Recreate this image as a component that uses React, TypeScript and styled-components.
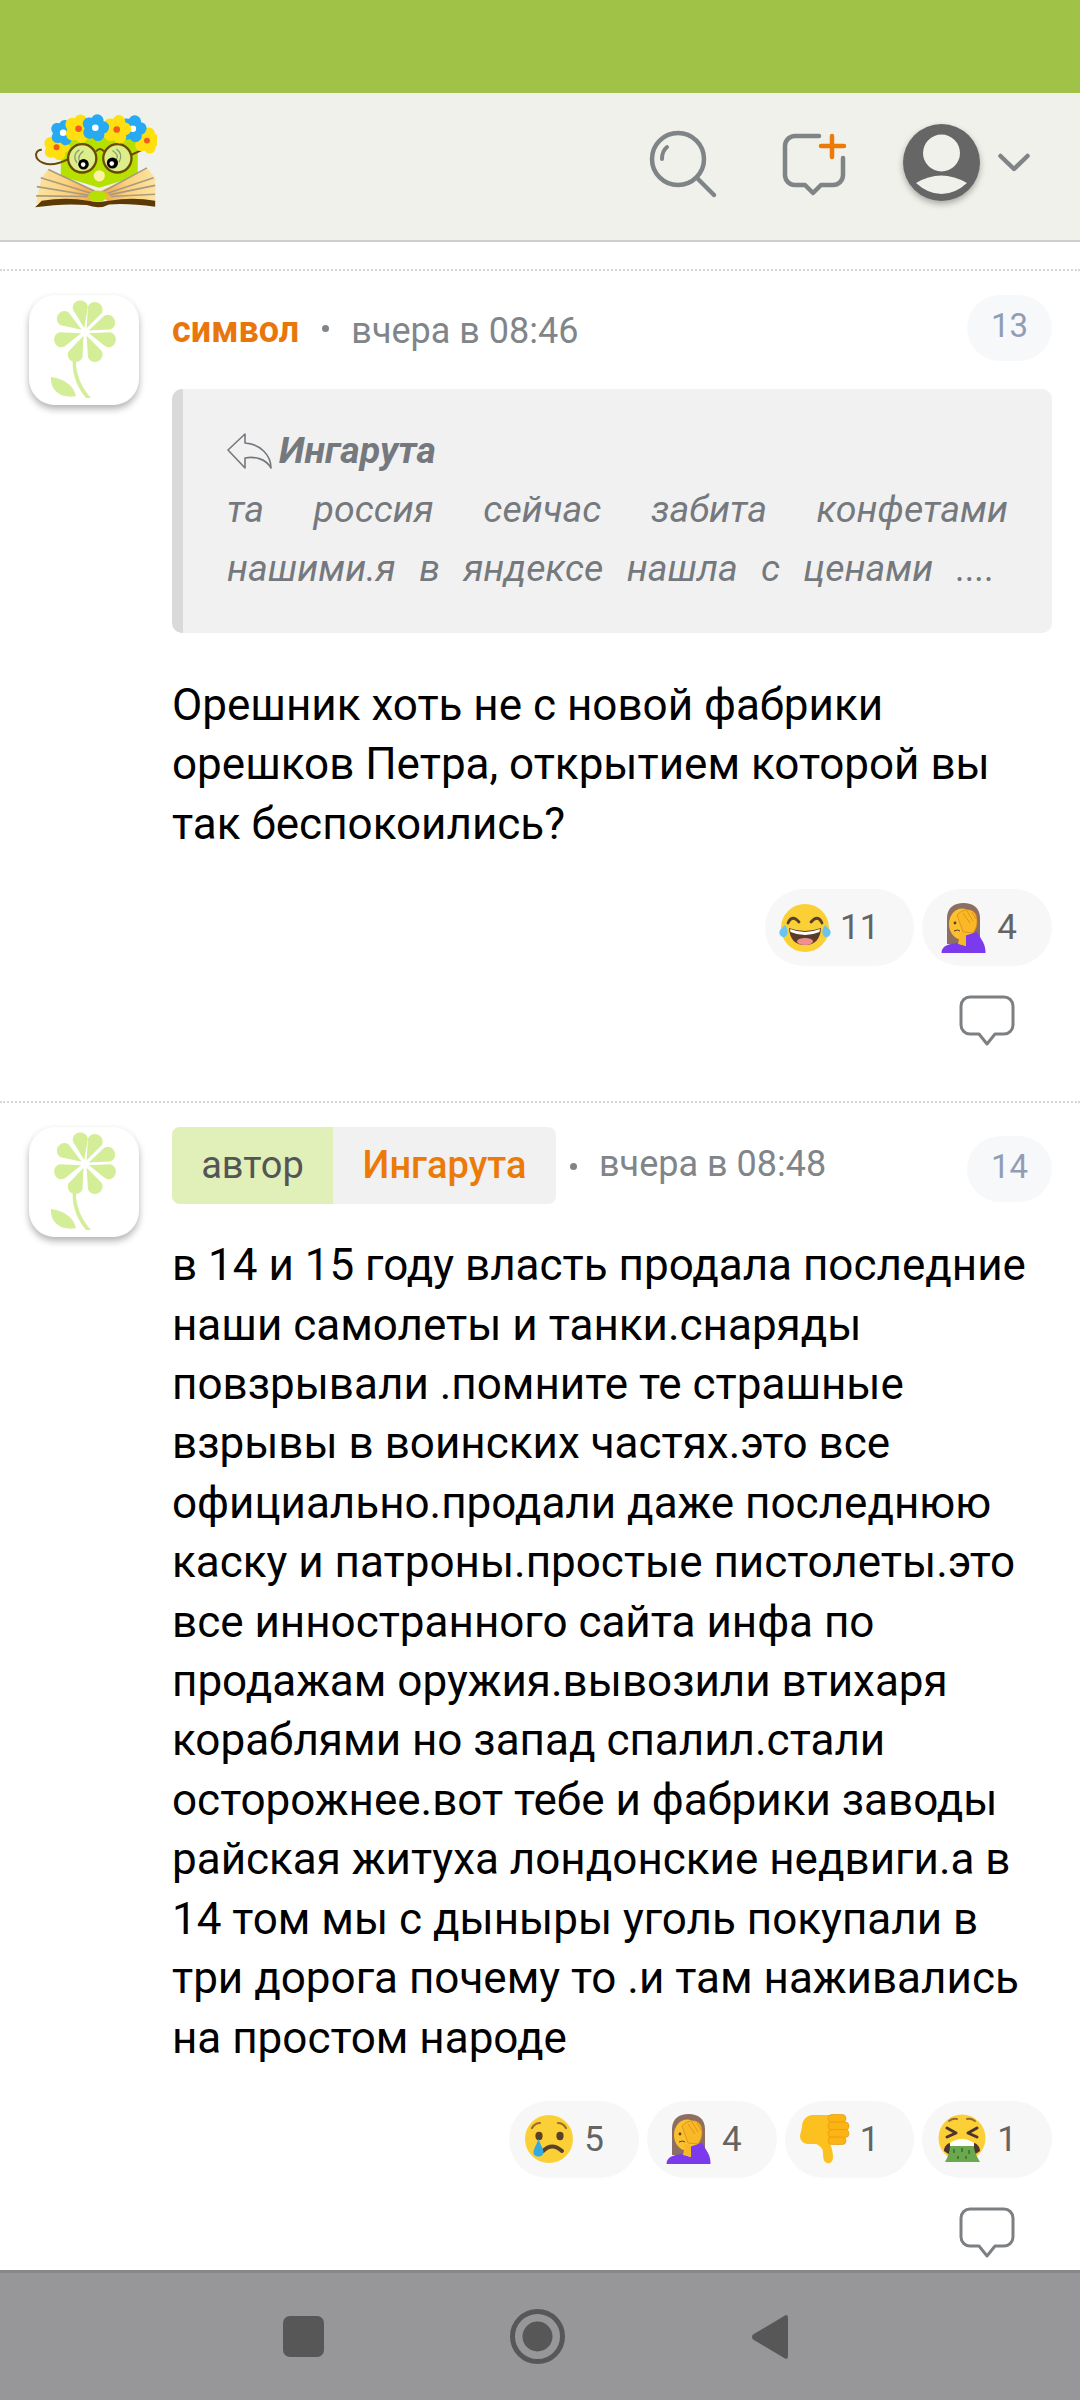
import React from "react";
import styled, { createGlobalStyle } from "styled-components";

const Global = createGlobalStyle`
  html, body { margin: 0; padding: 0; background: #fff; }
  body { font-family: Roboto, "Noto Sans", sans-serif; }
`;

const Page = styled.div`
  width: 1080px;
  height: 2400px;
  display: flex;
  flex-direction: column;
  overflow: hidden;
  background: #fff;
`;
const StatusBar = styled.div`
  height: 93px;
  flex: none;
  background: #a0c247;
`;
const Header = styled.header`
  height: 147px;
  flex: none;
  box-sizing: content-box;
  display: flex;
  align-items: center;
  padding: 0 50px 0 35px;
  background: #f0f1ea;
  border-bottom: 2px solid #cfcfcf;
`;
const LogoBox = styled.svg`
  width: 122px;
  height: 97px;
  margin-bottom: 12px;
`;
const Spacer = styled.div`
  flex: 1;
`;
const HeaderIcon = styled.svg<{ $w: number; $h: number; $gap: number; $shift?: number }>`
  width: ${(p) => p.$w}px;
  height: ${(p) => p.$h}px;
  margin-left: ${(p) => p.$gap}px;
  margin-bottom: ${(p) => p.$shift ?? 5}px;
  flex: none;
  overflow: visible;
`;
const ProfileIcon = styled(HeaderIcon)`
  filter: drop-shadow(0 3px 3px rgba(0, 0, 0, 0.3));
`;
const Feed = styled.main`
  flex: 1;
  min-height: 0;
  overflow: hidden;
  padding-top: 27px;
`;
const Comment = styled.article`
  display: grid;
  grid-template-columns: 110px 1fr;
  column-gap: 33px;
  padding: 24px 28px 0 29px;
  border-top: 2px dotted #d6d6d6;
`;
const Avatar = styled.div`
  width: 110px;
  height: 110px;
  border-radius: 26px;
  background: #fff;
  box-shadow: 0 4px 7px rgba(0, 0, 0, 0.3);
`;
const AvatarArt = styled.svg`
  display: block;
  width: 110px;
  height: 110px;
`;
const Content = styled.div`
  min-width: 0;
`;
const MetaRow = styled.div<{ $height: number }>`
  display: flex;
  align-items: flex-start;
  height: ${(p) => p.$height}px;
`;
const Name = styled.span`
  font-size: 36px;
  font-weight: 700;
  line-height: 70px;
  color: #e9760c;
`;
const AuthorChip = styled.div`
  display: flex;
  height: 77px;
  border-radius: 8px;
  overflow: hidden;
  background: #f1f1f1;
  font-size: 38px;
  line-height: 76px;
`;
const AuthorTag = styled.span`
  width: 161px;
  text-align: center;
  background: #e1f0b9;
  color: #555;
`;
const AuthorName = styled.span`
  width: 223px;
  text-align: center;
  font-weight: 500;
  color: #ec7a08;
`;
const Dot = styled.span<{ $top: number; $left: number; $right: number }>`
  width: 7px;
  height: 7px;
  flex: none;
  border-radius: 50%;
  background: #80858a;
  margin: ${(p) => p.$top}px ${(p) => p.$right}px 0 ${(p) => p.$left}px;
`;
const When = styled.span<{ $line: number }>`
  font-size: 36px;
  line-height: ${(p) => p.$line}px;
  color: #80858a;
`;
const Number = styled.span<{ $top: number }>`
  margin-left: auto;
  margin-top: ${(p) => p.$top}px;
  width: 85px;
  height: 66px;
  border-radius: 33px;
  background: #f7f8fa;
  font-size: 33px;
  line-height: 62px;
  text-align: center;
  color: #929db5;
`;
const Quote = styled.blockquote`
  box-sizing: border-box;
  height: 244px;
  margin: 28px 0 0;
  padding: 32px 0 0 44px;
  background: #f1f1f1;
  border-left: 11px solid #d9d9d9;
  border-radius: 10px;
  color: #75797d;
  font-style: italic;
  font-size: 37.5px;
  line-height: 59px;
`;
const QuoteAuthor = styled.div`
  display: flex;
  align-items: center;
  gap: 7px;
  font-weight: 700;
`;
const ReplyIcon = styled.svg`
  width: 45px;
  height: 36px;
  flex: none;
`;
const QuoteLine = styled.div<{ $width: number }>`
  width: ${(p) => p.$width}px;
  text-align: justify;
  text-align-last: justify;
`;
const Body = styled.p<{ $top: number }>`
  margin: ${(p) => p.$top}px 0 0;
  font-size: 44px;
  line-height: 59.4px;
  color: #000;
`;
const Reactions = styled.div<{ $top: number }>`
  display: flex;
  justify-content: flex-end;
  gap: 8px;
  margin-top: ${(p) => p.$top}px;
`;
const Pill = styled.div`
  display: flex;
  align-items: center;
  gap: 9px;
  height: 77px;
  padding: 0 35px 0 14px;
  border-radius: 39px;
  background: #f7f7f7;
  font-size: 35px;
  color: #646464;
`;
const EmojiArt = styled.svg`
  width: 52px;
  height: 52px;
  flex: none;
`;
const ReplyRow = styled.div`
  display: flex;
  justify-content: flex-end;
  padding: 29px 37px 54px 0;
`;
const ReplyBubble = styled.svg`
  display: block;
  width: 56px;
  height: 52px;
`;
const NavBar = styled.nav`
  height: 127px;
  flex: none;
  display: flex;
  align-items: center;
  justify-content: center;
  gap: 186px;
  padding-right: 10px;
  background: #979799;
  border-top: 3px solid #88888b;
`;
const NavIcon = styled.svg<{ $w: number; $h: number }>`
  width: ${(p) => p.$w}px;
  height: ${(p) => p.$h}px;
  flex: none;
`;

const Flower = ({ x, y, r, color, core, dot }: { x: number; y: number; r: number; color: string; core: string; dot: number }) => (
  <g transform={`translate(${x} ${y})`}>
    {[0, 72, 144, 216, 288].map((a) => (
      <ellipse key={a} cx={0} cy={-r * 0.6} rx={r * 0.56} ry={r * 0.6} fill={color} transform={`rotate(${a + 15})`} />
    ))}
    <circle r={dot} fill={core} />
  </g>
);

const Logo = () => (
  <LogoBox viewBox="105 95 370 295">
    <defs>
      <linearGradient id="pageL" x1="0" x2="1" y1="0" y2="0">
        <stop offset="0" stopColor="#fde3a0" />
        <stop offset="0.5" stopColor="#fbd27e" />
        <stop offset="1" stopColor="#f59a3c" />
      </linearGradient>
      <linearGradient id="pageR" x1="1" x2="0" y1="0" y2="0">
        <stop offset="0" stopColor="#fde3a0" />
        <stop offset="0.5" stopColor="#fbd27e" />
        <stop offset="1" stopColor="#f59a3c" />
      </linearGradient>
    </defs>
    <path d="M183 170H417V290L300 325L183 290Z" fill="#b5e000" />
    <path d="M108 372L124 295L145 270L232 312L298 338L270 372Z" fill="url(#pageL)" />
    <path d="M470 372V296L445 265L370 305L298 338L330 372Z" fill="url(#pageR)" />
    <g stroke="#a89b80" strokeWidth="5" fill="none">
      <path d="M145 270L285 335M122 295L275 342M110 322L268 348M108 350L265 352" />
      <path d="M445 265L315 335M465 295L325 342M470 318L330 347M470 345L335 352" />
    </g>
    <path d="M105 385L125 365Q200 352 265 365Q295 372 330 365Q400 352 470 365V383Q390 372 330 376Q300 392 262 378Q190 372 105 385Z" fill="#5b3a06" />
    <ellipse cx="295" cy="351" rx="28" ry="17" fill="#b5e000" />
    <ellipse cx="300" cy="289" rx="17" ry="17" fill="#fdf2a4" />
    <circle cx="248" cy="236" r="43" fill="#dcee8c" stroke="#6b4a06" strokeWidth="7" />
    <circle cx="355" cy="236" r="43" fill="#dcee8c" stroke="#6b4a06" strokeWidth="7" />
    <path d="M290 215Q302 200 314 215M205 238Q160 262 130 250Q105 240 108 222Q112 210 125 210M398 225L430 210" fill="none" stroke="#6b4a06" strokeWidth="6" />
    <path d="M240 210Q216 225 232 250M252 214Q232 228 240 245M352 208Q374 222 360 248M340 212Q362 226 352 240" fill="none" stroke="#8f9c72" strokeWidth="4" />
    <circle cx="252" cy="254" r="16" fill="#000" />
    <circle cx="251" cy="255" r="7" fill="#fff" />
    <circle cx="340" cy="250" r="17" fill="#000" />
    <circle cx="338" cy="252" r="7" fill="#fff" />
    <Flower x={170} y={202} r={34} color="#ffdf10" core="#f4591d" dot={9} />
    <Flower x={445} y={182} r={34} color="#ffdf10" core="#f4591d" dot={9} />
    <Flower x={190} y={158} r={33} color="#27a9f3" core="#fff" dot={10} />
    <Flower x={402} y={146} r={35} color="#27a9f3" core="#fff" dot={10} />
    <Flower x={237} y={146} r={37} color="#ffdf10" core="#f4591d" dot={10} />
    <Flower x={353} y={148} r={37} color="#ffdf10" core="#f4591d" dot={10} />
    <Flower x={288} y={143} r={35} color="#27a9f3" core="#fff" dot={10} />
  </LogoBox>
);

const Daisy = () => (
  <AvatarArt viewBox="0 0 110 110">
    <g fill="#d4ee97">
      {[-11, 24, 67, 108, 156, 203, 252, 303].map((a) => (
        <path key={a} transform={`translate(56 37) rotate(${a})`} d="M0 -4L-7.5 -24C-8 -29 -4 -32 0 -32C4 -32 8 -29 7.5 -24Z" />
      ))}
      <path d="M44 62L47 62C46 78 52 92 62 103L57 103C48 92 42 78 44 62Z" />
      <path d="M22 82C37 84 45 92 47 101C34 104 21 97 22 82Z" />
    </g>
  </AvatarArt>
);

const BubbleIcon = () => (
  <ReplyBubble viewBox="0 0 56 52">
    <path d="M11 2H45A9 9 0 0 1 54 11V30A9 9 0 0 1 45 39H36L28 49L20 39H11A9 9 0 0 1 2 30V11A9 9 0 0 1 11 2Z" fill="none" stroke="#7c8083" strokeWidth="3" strokeLinejoin="round" />
  </ReplyBubble>
);

const Joy = () => (
  <EmojiArt viewBox="0 0 52 52">
    <circle cx="26" cy="26" r="24" fill="#fbd036" />
    <path d="M9 21Q13 12 20 20M32 20Q39 12 43 21" fill="none" stroke="#5b3f26" strokeWidth="2.8" strokeLinecap="round" />
    <path d="M10 26Q26 32 42 26Q41 43 26 43Q11 43 10 26Z" fill="#5b3a2a" />
    <path d="M11 27Q26 33 41 27L40.5 30Q26 36 11.5 30Z" fill="#fff" />
    <ellipse cx="26" cy="39.5" rx="8" ry="3.4" fill="#f08f8f" />
    <path d="M6 23C9 27 10 32 6 35C2 36 -1 32 1 28Z" fill="#6cc4ee" />
    <path d="M46 23C43 27 42 32 46 35C50 36 53 32 51 28Z" fill="#6cc4ee" />
  </EmojiArt>
);

const Facepalm = () => (
  <EmojiArt viewBox="0 0 52 52">
    <path d="M11 42V16C11 6 18 1 27.500 1C37 1 44 6 44 16V42Z" fill="#8d6e63" />
    <ellipse cx="26" cy="22" rx="13" ry="15.500" fill="#fbc02d" />
    <path d="M21 13C27 6 37 6 40 13C42 20 41 26 37 31L27 30Z" fill="#f9b825" stroke="#d98c1a" strokeWidth="0.8" />
    <path d="M27 11L34 21M31 9L37 19M36 10L40 17" stroke="#d98c1a" strokeWidth="0.8" />
    <circle cx="19" cy="21" r="1.400" fill="#5b3f26" />
    <path d="M18 29Q22 27 24 29" fill="none" stroke="#5b3f26" strokeWidth="1" />
    <path d="M5.500 51C5.500 44 12 42 21 41L30 44L28 34L41 30L47 40C49 44 49.500 47 49.500 51Z" fill="#7c3aed" />
    <path d="M22 42L24 31L30 32L30 44Z" fill="#f9b825" />
  </EmojiArt>
);

const Cry = () => (
  <EmojiArt viewBox="0 0 52 52">
    <circle cx="26" cy="26" r="24" fill="#fbd036" />
    <ellipse cx="16" cy="23" rx="3.600" ry="4.200" fill="#5b3f26" />
    <ellipse cx="37" cy="23" rx="3.600" ry="4.200" fill="#5b3f26" />
    <path d="M9 15Q12 10 17 10M35 10Q40 10 43 15" fill="none" stroke="#9a6b2e" strokeWidth="2.200" strokeLinecap="round" />
    <path d="M20 38Q29 29 39 38" fill="none" stroke="#5b3f26" strokeWidth="4" strokeLinecap="round" />
    <path d="M15.500 26C13 33 10.500 36 10.500 39.500C10.500 45 20.500 45 20.500 39.500C20.500 36 18 33 15.500 26Z" fill="#36a9e1" />
  </EmojiArt>
);

const ThumbDown = () => (
  <EmojiArt viewBox="0 0 52 52">
    <path d="M3 14C3 8 7 2 14 2H31V30C32 33 34 38 34 44C34 49 31 51 28 50C25 49 24 46 24 40C24 36 22 33 17 31H9C4 31 1 27 1 23Z" fill="#fdc11f" />
    <g fill="#fbb414" stroke="#e59a0c" strokeWidth="0.700">
      <rect x="29" y="1.500" width="18" height="8" rx="4" />
      <rect x="29" y="9" width="21" height="8" rx="4" />
      <rect x="29" y="16.500" width="21" height="8" rx="4" />
      <rect x="29" y="24" width="18" height="7.500" rx="3.700" />
    </g>
  </EmojiArt>
);

const Vomit = () => (
  <EmojiArt viewBox="0 0 52 52">
    <circle cx="26" cy="25" r="23.500" fill="#fbd036" />
    <path d="M11 15L20 20L11 24M41 15L32 20L41 24" fill="none" stroke="#4e342e" strokeWidth="3" strokeLinecap="round" strokeLinejoin="round" />
    <path d="M13 8Q17 5 21 6M31 6Q35 5 39 8" fill="none" stroke="#9a6b2e" strokeWidth="2" strokeLinecap="round" />
    <path d="M8 38C8 33 12 30 14 30V42ZM44 38C44 33 40 30 38 30V42Z" fill="#4e342e" />
    <path d="M14 30Q26 22 38 30V33H14Z" fill="#fff" />
    <path d="M14 33H38C38 38 41 44 44 49H9C12 44 14 38 14 33Z" fill="#6aa84f" />
    <path d="M18 36V40M26 35V39M33 37V41M22 43V46M30 43V46" stroke="#38761d" strokeWidth="1.600" />
  </EmojiArt>
);

const meta: Record<string, () => React.JSX.Element> = { joy: Joy, palm: Facepalm, cry: Cry, down: ThumbDown, vomit: Vomit };

const Reaction = ({ kind, count }: { kind: string; count: number }) => {
  const Art = meta[kind];
  return (
    <Pill>
      <Art />
      <span>{count}</span>
    </Pill>
  );
};

export default function App() {
  return (
    <Page>
      <Global />
      <StatusBar />
      <Header>
        <Logo />
        <Spacer />
        <HeaderIcon $w={66} $h={66} $gap={0} viewBox="0 0 66 66">
          <circle cx="28" cy="28" r="26" fill="none" stroke="#7f8487" strokeWidth="4.500" />
          <path d="M47 47L64 64" stroke="#7f8487" strokeWidth="4.500" strokeLinecap="round" />
          <path d="M12 28Q12 20 17 16" fill="none" stroke="#7f8487" strokeWidth="4" strokeLinecap="round" />
        </HeaderIcon>
        <HeaderIcon $w={63} $h={63} $gap={67} viewBox="0 0 63 63">
          <path d="M36 3H12A10 10 0 0 0 2 13V42A10 10 0 0 0 12 52H22L30 60L38 52H50A10 10 0 0 0 60 42V25" fill="none" stroke="#7f8487" strokeWidth="4.500" strokeLinecap="round" strokeLinejoin="round" />
          <path d="M49 3V24M38 13H61" stroke="#ec7a08" strokeWidth="4.500" strokeLinecap="round" />
        </HeaderIcon>
        <ProfileIcon $w={77} $h={77} $gap={57} $shift={9} viewBox="0 0 77 77">
          <circle cx="38.500" cy="38.500" r="38.500" fill="#666" />
          <circle cx="38.500" cy="29" r="18.500" fill="#f0f1ea" />
          <path d="M13 59Q38 44 64 59Q52 70 38.500 70Q25 70 13 59Z" fill="#f0f1ea" />
        </ProfileIcon>
        <HeaderIcon $w={32} $h={19} $gap={18} $shift={9} viewBox="0 0 32 19">
          <path d="M2.500 3L16 16L29.500 3" fill="none" stroke="#7f8487" strokeWidth="4.500" strokeLinecap="round" strokeLinejoin="round" />
        </HeaderIcon>
      </Header>
      <Feed>
        <Comment>
          <Avatar>
            <Daisy />
          </Avatar>
          <Content>
            <MetaRow $height={66}>
              <Name>символ</Name>
              <Dot $top={30} $left={23} $right={22} />
              <When $line={72}>вчера в 08:46</When>
              <Number $top={0}>13</Number>
            </MetaRow>
            <Quote>
              <QuoteAuthor>
                <ReplyIcon viewBox="0 0 45 36">
                  <path d="M18 1L1 17L18 35V25C28 23 39 26 44 35C44 22 33 11 18 10Z" fill="none" stroke="#75797d" strokeWidth="1.600" strokeLinejoin="round" />
                </ReplyIcon>
                <span>Ингарута</span>
              </QuoteAuthor>
              <QuoteLine $width={781}>та россия сейчас забита конфетами</QuoteLine>
              <QuoteLine $width={768}>нашими.я в яндексе нашла с ценами ....</QuoteLine>
            </Quote>
            <Body $top={43}>
              Орешник хоть не с новой фабрики орешков Петра, открытием которой вы так беспокоились?
            </Body>
            <Reactions $top={35}>
              <Reaction kind="joy" count={11} />
              <Reaction kind="palm" count={4} />
            </Reactions>
            <ReplyRow>
              <BubbleIcon />
            </ReplyRow>
          </Content>
        </Comment>
        <Comment>
          <Avatar>
            <Daisy />
          </Avatar>
          <Content>
            <MetaRow $height={77}>
              <AuthorChip>
                <AuthorTag>автор</AuthorTag>
                <AuthorName>Ингарута</AuthorName>
              </AuthorChip>
              <Dot $top={36} $left={14} $right={22} />
              <When $line={74}>вчера в 08:48</When>
              <Number $top={9}>14</Number>
            </MetaRow>
            <Body $top={32}>
              в 14 и 15 году власть продала последние наши самолеты и танки.снаряды повзрывали .помните те страшные взрывы в воинских частях.это все официально.продали даже последнюю каску и патроны.простые пистолеты.это все инностранного сайта инфа по продажам оружия.вывозили втихаря кораблями но запад спалил.стали осторожнее.вот тебе и фабрики заводы райская житуха лондонские недвиги.а в 14 том мы с дыныры уголь покупали в три дорога почему то .и там наживались на простом народе
            </Body>
            <Reactions $top={33}>
              <Reaction kind="cry" count={5} />
              <Reaction kind="palm" count={4} />
              <Reaction kind="down" count={1} />
              <Reaction kind="vomit" count={1} />
            </Reactions>
            <ReplyRow>
              <BubbleIcon />
            </ReplyRow>
          </Content>
        </Comment>
      </Feed>
      <NavBar>
        <NavIcon $w={41} $h={41} viewBox="0 0 41 41">
          <rect width="41" height="41" rx="7" fill="#575757" />
        </NavIcon>
        <NavIcon $w={55} $h={55} viewBox="0 0 55 55">
          <circle cx="27.500" cy="27.500" r="25" fill="none" stroke="#575757" strokeWidth="5" />
          <circle cx="27.500" cy="27.500" r="15" fill="#575757" />
        </NavIcon>
        <NavIcon $w={37} $h={46} viewBox="0 0 37 46">
          <path d="M34 1.500Q37 0 37 4V42Q37 46 34 44.500L2 25.500Q0 23 2 20.500Z" fill="#575757" />
        </NavIcon>
      </NavBar>
    </Page>
  );
}
